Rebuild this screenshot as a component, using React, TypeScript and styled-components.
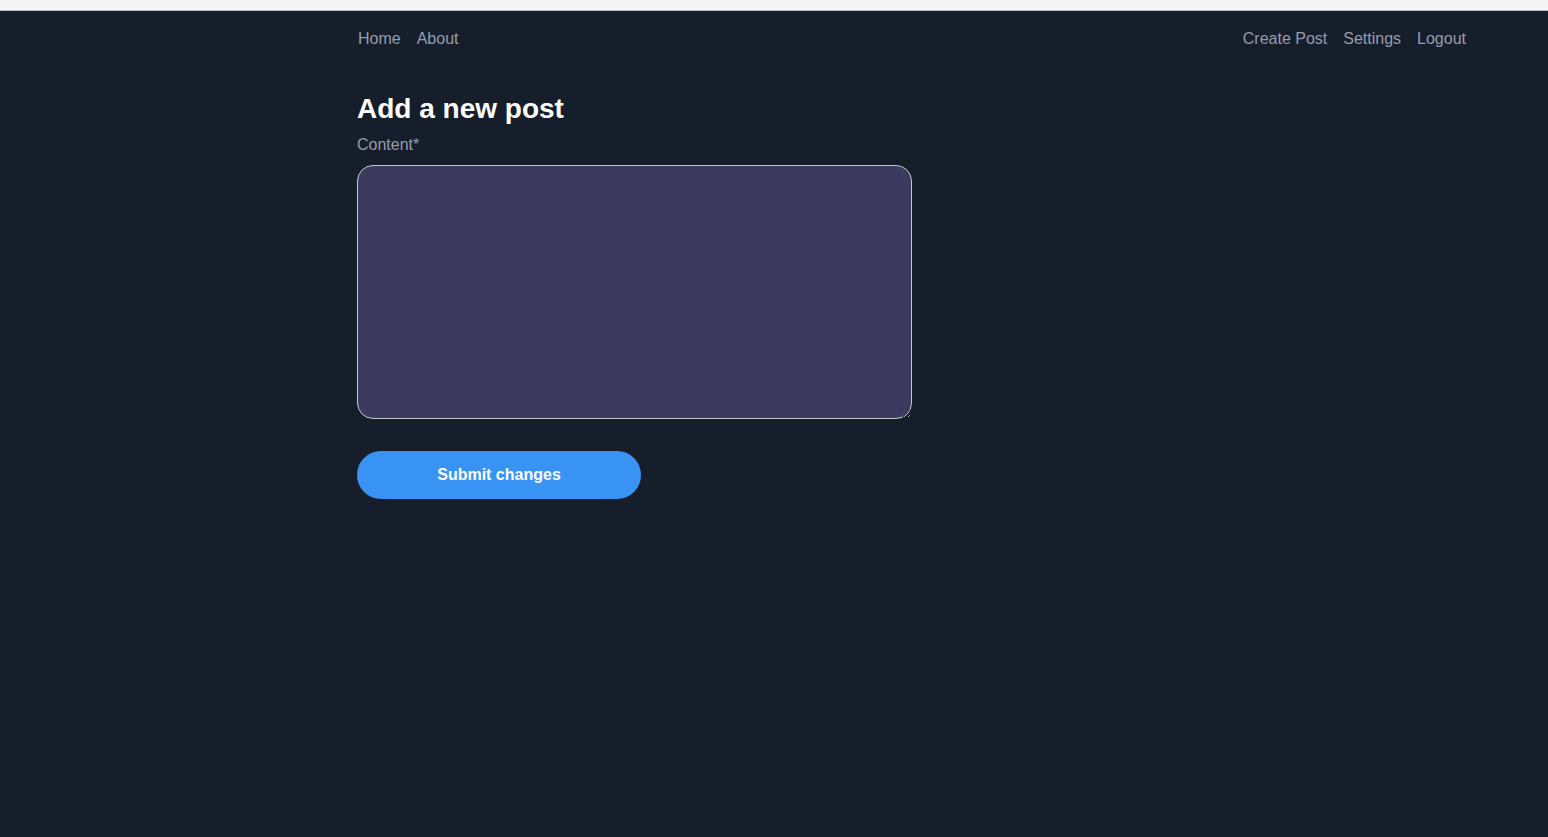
import React from "react";
import styled, { createGlobalStyle } from "styled-components";

const Global = createGlobalStyle`
  html, body { margin: 0; padding: 0; background: #171e2b; }
  body { font-family: "Liberation Sans", Arial, sans-serif; }
  * { box-sizing: border-box; }
`;

const Page = styled.div`
  min-height: 837px;
  background: #171e2b;
  display: flex;
  flex-direction: column;
`;

const TopStrip = styled.div`
  height: 11px;
  background: #f5f5f5;
  border-bottom: 1px solid #b9bcc2;
`;

const Container = styled.div`
  padding: 0 82px 0 357px;
  display: flex;
  flex-direction: column;
`;

const Nav = styled.nav`
  display: flex;
  justify-content: space-between;
  align-items: center;
  height: 54px;
  padding-top: 2px;
`;

const NavGroup = styled.div<{ $offset?: number }>`
  display: flex;
  gap: 16px;
  margin-left: ${(p) => p.$offset ?? 0}px;
`;

const NavLink = styled.a`
  color: #959dab;
  font-size: 16px;
  text-decoration: none;
  cursor: pointer;
`;

const Main = styled.main`
  display: flex;
  flex-direction: column;
  padding-top: 26px;
`;

const Title = styled.h1`
  margin: 0;
  font-size: 28px;
  line-height: 36px;
  font-weight: 700;
  color: #ffffff;
`;

const Label = styled.label`
  margin-top: 8px;
  font-size: 16px;
  line-height: 20px;
  color: #959dab;
`;

const TextArea = styled.textarea`
  margin-top: 10px;
  width: 555px;
  height: 254px;
  background: #3c3a5e;
  border: 1px solid #c5c7cc;
  border-radius: 16px;
  color: #fff;
  font-family: inherit;
  font-size: 16px;
  padding: 10px 14px;
  outline: none;
`;

const Button = styled.button`
  margin-top: 32px;
  width: 284px;
  height: 48px;
  border: none;
  border-radius: 24px;
  background: #3893f5;
  color: #fff;
  font-family: inherit;
  font-size: 16px;
  font-weight: 700;
  cursor: pointer;
`;

export default function App() {
  return (
    <>
      <Global />
      <Page>
        <TopStrip />
        <Container>
          <Nav>
            <NavGroup $offset={1}>
              <NavLink>Home</NavLink>
              <NavLink>About</NavLink>
            </NavGroup>
            <NavGroup>
              <NavLink>Create Post</NavLink>
              <NavLink>Settings</NavLink>
              <NavLink>Logout</NavLink>
            </NavGroup>
          </Nav>
          <Main>
            <Title>Add a new post</Title>
            <Label>Content*</Label>
            <TextArea />
            <div>
              <Button>Submit changes</Button>
            </div>
          </Main>
        </Container>
      </Page>
    </>
  );
}
